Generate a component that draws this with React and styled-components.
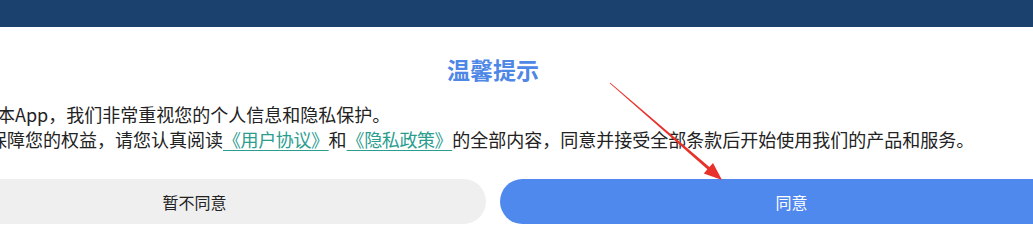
import React from "react";
import styled, { createGlobalStyle } from "styled-components";

const GlobalStyle = createGlobalStyle`
    html, body {
        margin: 0;
        padding: 0;
        background: #fff;
        overflow: hidden;
    }
    body {
        font-family: "Noto Sans CJK SC", "Noto Sans", sans-serif;
    }
`;

const Page = styled.div`
    position: relative;
    width: 1033px;
    height: 252px;
    overflow: hidden;
    background: #fff;
`;

const TopBar = styled.div`
    height: 27px;
    background: #1b416e;
`;

const Dialog = styled.div`
    width: 1180px;
    margin-left: -97px;
`;

const Title = styled.h2`
    margin: 28px 0 0;
    text-align: center;
    font-size: 23px;
    line-height: 28px;
    font-weight: 700;
    color: #4f87e6;
`;

const Message = styled.div`
    margin-top: 19px;
    padding-left: 4px;
    font-size: 18px;
    line-height: 25px;
    color: #222;
    white-space: nowrap;
`;

const Line = styled.p`
    margin: 0 0 0 ${(p) => p.$shift || 0}px;
`;

const DocLink = styled.a`
    color: #2a9d8f;
    text-decoration: underline;
    text-underline-offset: 3px;
    text-decoration-thickness: 1px;
    letter-spacing: -0.4px;
`;

const Actions = styled.div`
    display: grid;
    grid-template-columns: 1fr 1fr;
    gap: 14px;
    margin-top: 27px;
`;

const ActionButton = styled.button`
    height: 45px;
    border: none;
    border-radius: 23px;
    font-family: inherit;
    font-size: 16px;
    background: ${(p) => (p.$primary ? "#5089ee" : "#efefef")};
    color: ${(p) => (p.$primary ? "#fff" : "#222")};
    cursor: pointer;
`;

const Overlay = styled.svg`
    position: absolute;
    left: 0;
    top: 0;
    pointer-events: none;
`;

export default function App() {
    return (
        <Page>
            <GlobalStyle />
            <TopBar />
            <Dialog>
                <Title>温馨提示</Title>
                <Message>
                    <Line>欢迎您使用本App，我们非常重视您的个人信息和隐私保护。</Line>
                    <Line $shift={-8}>
                        为了更好地保障您的权益，请您认真阅读
                        <DocLink href="#">《用户协议》</DocLink>和
                        <DocLink href="#">《隐私政策》</DocLink>
                        的全部内容，同意并接受全部条款后开始使用我们的产品和服务。
                    </Line>
                </Message>
                <Actions>
                    <ActionButton>暂不同意</ActionButton>
                    <ActionButton $primary>同意</ActionButton>
                </Actions>
            </Dialog>
            <Overlay width="1033" height="252" viewBox="0 0 1033 252">
                <polygon
                    points="610.3,82.7 709.4,167.1 713,162.9 722,180 703.8,173.5 707.4,169.3 609.7,83.3"
                    fill="#e8312a"
                />
            </Overlay>
        </Page>
    );
}
